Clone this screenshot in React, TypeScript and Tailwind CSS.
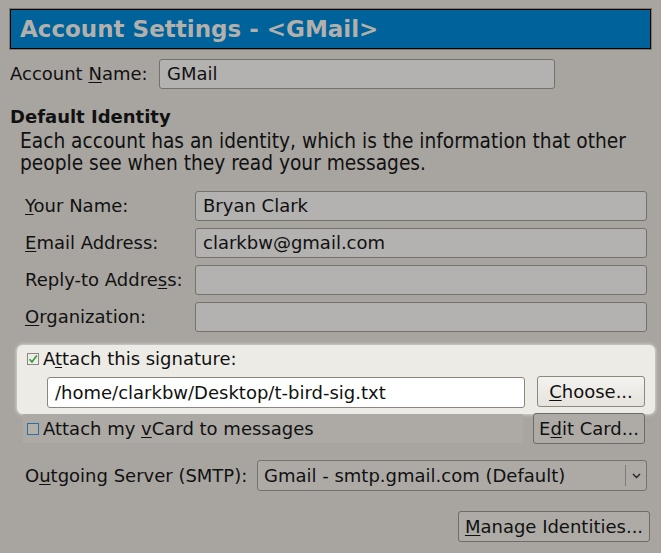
import React from 'react';

const Check = () => (
  <span className="w-[12px] h-[12px] border border-[#8a8680] bg-[#efede9] flex items-center justify-center">
    <svg width="10" height="10" viewBox="0 0 10 10">
      <path d="M1.5 5.2 L4 8 L8.8 1.5" fill="none" stroke="#2f9a2f" strokeWidth="1.6" />
    </svg>
  </span>
);

const Field = ({ label, u, rest, value }: { label: string; u: string; rest: string; value?: string }) => (
  <div className="flex items-center h-[30px]">
    <span className="w-[170px] whitespace-nowrap">
      {label}
      <u className="underline-offset-2">{u}</u>
      {rest}
    </span>
    <div className="w-[452px] h-[30px] bg-[#b3b2b0] border border-[#75716c] rounded-[3px] px-[7px] flex items-center">
      {value}
    </div>
  </div>
);

export default function App() {
  return (
    <div className="w-[661px] h-[553px] overflow-hidden bg-[#a8a5a0] text-[#111] text-[18px] leading-[22px] font-['DejaVu_Sans',sans-serif]">
      {/* title bar */}
      <div className="pt-[9px] px-[10px]">
        <div className="h-[40px] bg-[#00629b] border border-black shadow-[0_0_0_1px_#7d7771] flex items-center pl-[9px]">
          <span className="font-bold text-[23px] text-[#b3b0ac]">Account Settings - &lt;GMail&gt;</span>
        </div>
      </div>

      <div className="px-[10px]">
        <div className="flex items-center h-[30px] mt-[10px]">
          <span className="w-[149px] whitespace-nowrap">
            Account <u className="underline-offset-2">N</u>ame:
          </span>
          <div className="w-[396px] h-[30px] bg-[#b3b2b0] border border-[#75716c] rounded-[3px] px-[7px] flex items-center">
            GMail
          </div>
        </div>

        <div className="mt-[17px] font-bold">Default Identity</div>
        <div className="mt-[2px] pl-[10px] text-[20.7px] leading-[22px] font-['DejaVu_Sans_Condensed','DejaVu_Sans',sans-serif] [font-stretch:condensed]">
          Each account has an identity, which is the information that other
          <br />
          people see when they read your messages.
        </div>

        <div className="mt-[17px] pl-[15px] flex flex-col gap-[7px]">
          <Field label="" u="Y" rest="our Name:" value="Bryan Clark" />
          <Field label="" u="E" rest="mail Address:" value="clarkbw@gmail.com" />
          <Field label="Reply-to Addre" u="s" rest="s:" />
          <Field label="" u="O" rest="rganization:" />
        </div>
      </div>

      {/* highlighted signature block */}
      <div className="mt-[13px] ml-[17px] w-[638px] h-[69px] bg-[#edebe6] rounded-[6px] shadow-[0_0_3px_1px_#d6d3ce] pl-[10px] pt-[7px]">
        <div className="flex items-center gap-[4px] h-[14px]">
          <Check />
          <span>
            A<u className="underline-offset-2">t</u>tach this signature:
          </span>
        </div>
        <div className="flex items-start mt-[11px] pl-[20px]">
          <div className="w-[478px] h-[31px] bg-white border border-[#8a857f] rounded-[3px] px-[7px] flex items-center">
            /home/clarkbw/Desktop/t-bird-sig.txt
          </div>
          <div className="ml-[12px] -mt-[1px] w-[108px] h-[31px] bg-[linear-gradient(#f4f2ef,#e6e3de)] border border-[#8c877f] rounded-[3px] flex items-center justify-center">
            <span>
              <u className="underline-offset-2">C</u>hoose...
            </span>
          </div>
        </div>
      </div>

      {/* vCard */}
      <div className="flex items-start pl-[23px]">
        <div className="w-[500px] h-[29px] bg-[#adaaa6] flex items-center pl-[4px] gap-[4px]">
          <span className="w-[12px] h-[12px] border border-[#2c6f9e] bg-[#b3b0ac]" />
          <span>
            Attach my <u className="underline-offset-2">v</u>Card to messages
          </span>
        </div>
        <div className="ml-[10px] -mt-[1px] w-[112px] h-[31px] bg-[#aeaba7] border border-[#6f6b67] rounded-[3px] flex items-center justify-center">
          <span>
            E<u className="underline-offset-2">d</u>it Card...
          </span>
        </div>
      </div>

      {/* outgoing server */}
      <div className="flex items-center mt-[16px] pl-[25px]">
        <span className="w-[232px] whitespace-nowrap">
          O<u className="underline-offset-2">u</u>tgoing Server (SMTP):
        </span>
        <div className="w-[390px] h-[31px] bg-[#adaaa6] border border-[#75716c] rounded-[3px] flex items-center">
          <span className="flex-1 pl-[6px]">Gmail - smtp.gmail.com (Default)</span>
          <span className="w-px h-[21px] bg-[#7f7a75]" />
          <span className="w-[20px] flex items-center justify-center">
            <svg width="9" height="6" viewBox="0 0 9 6">
              <path d="M1 1 L4.5 4.5 L8 1" fill="none" stroke="#222" strokeWidth="1.4" />
            </svg>
          </span>
        </div>
      </div>

      <div className="flex justify-end pr-[11px] mt-[20px]">
        <div className="w-[192px] h-[31px] bg-[#aeaba7] border border-[#6f6b67] rounded-[3px] flex items-center justify-center">
          <span>
            <u className="underline-offset-2">M</u>anage Identities...
          </span>
        </div>
      </div>
    </div>
  );
}
